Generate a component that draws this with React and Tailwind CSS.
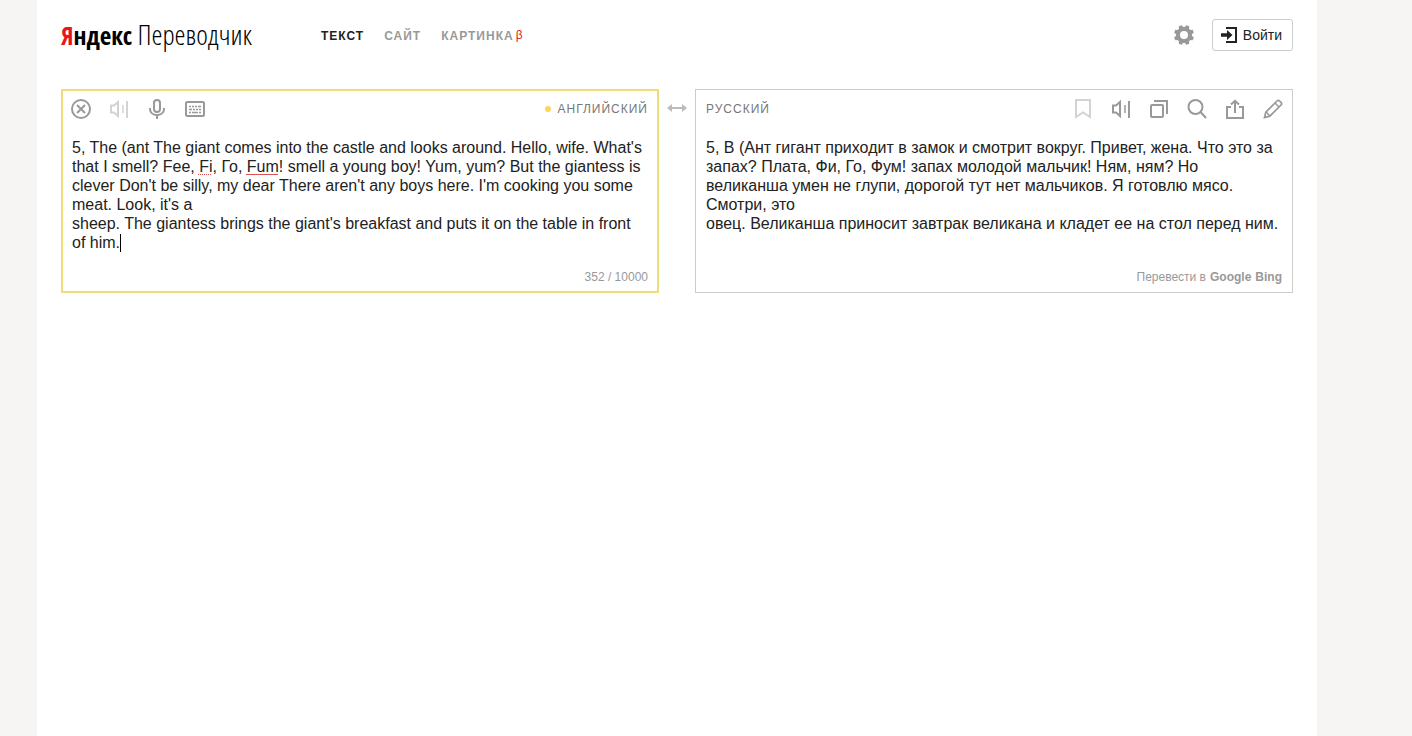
import { useState } from 'react';

const SOURCE_TEXT = `5, The (ant The giant comes into the castle and looks around. Hello, wife. What's that I smell? Fee, Fi, Го, Fum! smell a young boy! Yum, yum? But the giantess is clever Don't be silly, my dear There aren't any boys here. I'm cooking you some meat. Look, it's a
sheep. The giantess brings the giant's breakfast and puts it on the table in front of him.`;

const RESULT_TEXT = `5, В (Ант гигант приходит в замок и смотрит вокруг. Привет, жена. Что это за запах? Плата, Фи, Го, Фум! запах молодой мальчик! Ням, ням? Но великанша умен не глупи, дорогой тут нет мальчиков. Я готовлю мясо. Смотри, это
овец. Великанша приносит завтрак великана и кладет ее на стол перед ним.`;

function Icon({ children }) {
  return (
    <svg viewBox="0 0 20 20" className="w-5 h-5" fill="none" stroke="currentColor" strokeWidth="2" aria-hidden="true">
      {children}
    </svg>
  );
}

function ClearIcon() {
  return (
    <Icon>
      <circle cx="10" cy="10" r="9" />
      <path d="M6 6l8 8M14 6l-8 8" />
    </Icon>
  );
}

function SpeakerIcon() {
  return (
    <Icon>
      <path d="M2 6.5h3L9 3v14l-4-3.500H2z" />
      <path d="M14 6v8" strokeWidth="1.5" />
      <path d="M18 2v17" />
    </Icon>
  );
}

function MicIcon() {
  return (
    <Icon>
      <rect x="7" y="1" width="6" height="12" rx="3" />
      <path d="M3 9v1c0 3.500 3 6 7 6s7-2.500 7-6V9M10 16v4" />
    </Icon>
  );
}

function KeyboardIcon() {
  return (
    <Icon>
      <rect x="1" y="3" width="18" height="14" rx="1.500" />
      <path d="M4 7.500h2M7 7.500h2M10 7.500h2M13 7.500h3M4 10.500h3M8 10.500h2M11 10.500h2M14 10.500h2M4 13.500h2M7 13.500h6M14 13.500h2" strokeWidth="1.500" />
    </Icon>
  );
}

function BookmarkIcon() {
  return (
    <Icon>
      <path d="M3 1h14v17l-7-4.500L3 18z" />
    </Icon>
  );
}

function CopyIcon() {
  return (
    <Icon>
      <rect x="2" y="6" width="12" height="12" rx="1" />
      <path d="M5 2h13v13" />
    </Icon>
  );
}

function SearchIcon() {
  return (
    <Icon>
      <circle cx="8.500" cy="8" r="7" />
      <path d="M13.500 13l5.500 6" />
    </Icon>
  );
}

function ShareIcon() {
  return (
    <Icon>
      <path d="M6 8H2v11h16V8h-4M10 14V2M6 5.500L10 1.800l4 3.700" />
    </Icon>
  );
}

function PencilIcon() {
  return (
    <Icon>
      <path d="M1.500 18.500l1.300-5.300L14 2c.8-.8 1.800-.8 2.600 0L18 3.400c.8.800.8 1.800 0 2.600L6.800 17.200z" strokeWidth="1.700" />
      <path d="M12 4l4 4M3 13l4 4" strokeWidth="1.500" />
    </Icon>
  );
}

function GearIcon() {
  return (
    <svg viewBox="0 0 20 20" className="w-5 h-5" fill="none" stroke="currentColor" aria-hidden="true">
      <circle cx="10" cy="10" r="6" strokeWidth="4" />
      {[22.5, 67.5, 112.5, 157.5].map((angle) => (
        <path
          key={angle}
          d="M7.500 3l1-3h3l1 3zM7.500 17l1 3h3l1-3z"
          fill="currentColor"
          stroke="none"
          transform={`rotate(${angle} 10 10)`}
        />
      ))}
    </svg>
  );
}

function LoginIcon() {
  return (
    <svg viewBox="0 0 16 16" className="w-4 h-4" fill="none" stroke="currentColor" aria-hidden="true">
      <path d="M5 1h10v14H5" strokeWidth="2" />
      <path d="M0 6.200h6V3l5.500 5L6 13V9.800H0z" fill="currentColor" stroke="none" />
    </svg>
  );
}

function ToolButton({ label, muted, children }) {
  return (
    <button type="button" aria-label={label} className={muted ? 'text-[#d3d3d3]' : 'text-[#999] hover:text-black'}>
      {children}
    </button>
  );
}

function Header() {
  return (
    <header className="flex items-center h-[70px]">
      <a href="#" className="w-[260px] shrink-0 text-[28px] leading-8 whitespace-nowrap text-black">
        <span className="font-bold text-[25px] font-['Open_Sans_Condensed','Open_Sans',sans-serif]"><span className="text-[#e8161b]">Я</span>ндекс</span>
        <span className="font-light font-['Open_Sans_Condensed_Light','Open_Sans_Light_Condensed','Open_Sans_Condensed','Open_Sans',sans-serif]"> Переводчик</span>
      </a>

      <nav className="flex gap-5 pt-px text-xs font-bold tracking-[1px] text-[#999]">
        <a href="#" className="text-[#222]">ТЕКСТ</a>
        <a href="#">САЙТ</a>
        <a href="#">КАРТИНКА<sup className="ml-0.5 font-normal text-[#d22] text-xs leading-none -top-px">β</sup></a>
      </nav>

      <div className="flex items-center gap-[18px] ml-auto">
        <button type="button" aria-label="Настройки" className="text-[#999]">
          <GearIcon />
        </button>
        <button type="button" className="flex items-center gap-1.5 h-8 pl-2 pr-[10px] border border-[#ccc] rounded-[3px] text-sm text-[#222]">
          <LoginIcon />
          Войти
        </button>
      </div>
    </header>
  );
}

function SourcePanel() {
  const [text, setText] = useState(SOURCE_TEXT);
  const untouched = text === SOURCE_TEXT;

  return (
    <section className="flex flex-col min-w-0 border-2 border-[#f0dc78]">
      <div className="flex items-center gap-[18px] h-9 pl-2 pr-[9px]">
        <ToolButton label="Очистить"><ClearIcon /></ToolButton>
        <ToolButton label="Прослушать" muted><SpeakerIcon /></ToolButton>
        <ToolButton label="Голосовой ввод"><MicIcon /></ToolButton>
        <ToolButton label="Клавиатура"><KeyboardIcon /></ToolButton>
        <button type="button" className="flex items-center gap-1.5 ml-auto text-xs tracking-[1px] text-[#777]">
          <span className="w-1.5 h-1.5 rounded-full bg-[#fbd75b]"></span>
          АНГЛИЙСКИЙ
        </button>
      </div>
      <div className="relative flex">
        <textarea
          aria-label="Исходный текст"
          spellCheck={false}
          rows={6}
          value={text}
          onChange={(e) => setText(e.target.value)}
          className="block w-full pl-[9px] pr-3 pt-[11px] text-base leading-[19px] resize-none outline-none overflow-hidden bg-transparent"
        />
        {/* spelling marks and caret */}
        {untouched && (
          <>
            <span className="absolute left-[135px] top-[47px] w-[13px] border-b border-dotted border-[#e05050]"></span>
            <span className="absolute left-[183px] top-[47px] w-[32px] h-px bg-[#e05050]"></span>
            <span className="absolute left-[57px] top-[107px] w-px h-[18px] bg-black"></span>
          </>
        )}
      </div>
      <div className="flex items-center justify-end h-7 mt-auto px-[9px] text-xs text-[#999]">352 / 10000</div>
    </section>
  );
}

function ResultPanel() {
  return (
    <section className="flex flex-col min-w-0 border border-[#ccc]">
      <div className="flex items-center gap-[18px] h-[38px] pl-[10px] pr-[9px]">
        <button type="button" className="mr-auto text-xs tracking-[1px] text-[#777]">РУССКИЙ</button>
        <ToolButton label="Избранное" muted><BookmarkIcon /></ToolButton>
        <ToolButton label="Прослушать"><SpeakerIcon /></ToolButton>
        <ToolButton label="Копировать"><CopyIcon /></ToolButton>
        <ToolButton label="Словарь"><SearchIcon /></ToolButton>
        <ToolButton label="Поделиться"><ShareIcon /></ToolButton>
        <ToolButton label="Редактировать"><PencilIcon /></ToolButton>
      </div>
      <p className="px-[10px] pt-[10px] text-base leading-[19px] whitespace-pre-line">{RESULT_TEXT}</p>
      <div className="flex items-center justify-end gap-1 h-[30px] mt-auto px-[10px] text-xs text-[#999]">
        <span>Перевести в</span>
        <a href="#" className="font-bold">Google</a>
        <a href="#" className="font-bold">Bing</a>
      </div>
    </section>
  );
}

export default function App() {
  return (
    <div className="min-h-screen bg-[#f6f5f3] pl-[37px] font-['Liberation_Sans',Arial,sans-serif] text-[#222]">
      <div className="max-w-[1280px] min-h-screen px-6 bg-white">
        <Header />
        <main className="grid grid-cols-[1fr_36px_1fr] min-h-[204px] mt-[19px]">
          <SourcePanel />
          <div className="h-[38px] flex items-center justify-center">
            <button type="button" aria-label="Поменять языки" className="text-[#bbb]">
              <svg viewBox="0 0 20 10" className="w-5 h-2.5" fill="currentColor" aria-hidden="true">
                <path d="M0 5l5-4v3h10V1l5 4-5 4V6H5v3z" />
              </svg>
            </button>
          </div>
          <ResultPanel />
        </main>
      </div>
    </div>
  );
}
